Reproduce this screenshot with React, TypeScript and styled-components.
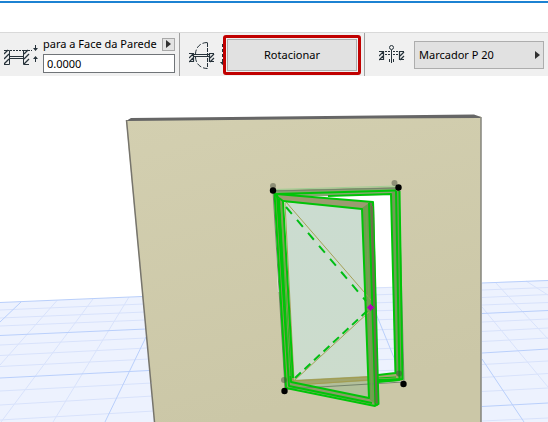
import React from "react";
import styled, { createGlobalStyle } from "styled-components";

const GlobalStyle = createGlobalStyle`
  * { box-sizing: border-box; }
  body {
    margin: 0;
    background: #ffffff;
    color: #000000;
    font: 11px/16px "Noto Sans", "Open Sans", sans-serif;
    overflow-x: hidden;
  }
`;

const Page = styled.main`
  display: flex;
  flex-direction: column;
`;

const TitleEdge = styled.div`
  height: 32px;
  border-top: 1px solid #ffffff;
  background: linear-gradient(#1c82d2 2px, #ffffff 2px);
`;

const Toolbar = styled.div`
  display: flex;
  height: 44px;
  border-top: 1px solid #d9d9d9;
  background: #f0f0f0;
`;

const Group = styled.section<{ $grow?: boolean; $gap?: number; $start?: number }>`
  display: flex;
  align-items: center;
  gap: ${(p) => p.$gap ?? 0}px;
  flex: ${(p) => (p.$grow ? "1" : "none")};
  padding: 0 4px 0 ${(p) => p.$start ?? 4}px;
  & + & {
    border-left: 1px solid #a0a0a0;
  }
`;

const ToolIcon = styled.svg`
  flex: none;
  fill: none;
  stroke: #26323a;
`;

const Field = styled.div`
  display: flex;
  flex-direction: column;
  gap: 2px;
  width: 132px;
`;

const FieldHead = styled.div`
  display: flex;
  align-items: center;
  justify-content: space-between;
  white-space: nowrap;
`;

const ArrowButton = styled.button`
  display: grid;
  place-items: center;
  width: 13px;
  height: 13px;
  padding: 0;
  border: 1px solid #a8a8a8;
  background: #e3e3e3;
`;

const Arrow = styled.svg`
  flex: none;
  fill: #303030;
`;

const ValueInput = styled.input`
  width: 100%;
  height: 19px;
  padding: 0 3px;
  border: 1px solid #707478;
  border-radius: 0;
  background: #ffffff;
  color: inherit;
  font: inherit;
`;

const Highlight = styled.div`
  z-index: 1;
  width: 138px;
  height: 40px;
  margin: 0 -1px 0 -2px;
  padding: 1px;
  border: 3px solid #c00000;
  border-radius: 3px;
  background: #f0f0f0;
`;

const ActionButton = styled.button`
  width: 100%;
  height: 100%;
  border: 1px solid #adadad;
  background: #e1e1e1;
  color: inherit;
  font: inherit;
`;

const MenuButton = styled.button`
  display: flex;
  flex: 1;
  align-items: center;
  justify-content: space-between;
  height: 28px;
  padding: 0 3px 0 4px;
  border: 1px solid #adadad;
  background: #e1e1e1;
  color: inherit;
  font: inherit;
  white-space: nowrap;
`;

const Viewport = styled.svg`
  display: block;
  width: 100%;
  height: auto;
`;

function RightArrow() {
  return (
    <Arrow width="5" height="8" viewBox="0 0 5 8" aria-hidden="true">
      <path d="M0 0 L5 4 L0 8Z" />
    </Arrow>
  );
}

function OffsetIcon() {
  return (
    <ToolIcon width="39" height="28" viewBox="0 41 39 28" aria-hidden="true">
      <path d="M0 54L4 50 M0 59L5 54 M0 64L5 59 M20 54L24 50 M20 59L25 54 M20 64L25 59" strokeWidth="1.3" />
      <path d="M0 50.5H5.5V64.5H0 M25 50.5H19.5V64.5H25" />
      <path d="M5.5 56.5H19.5 M5.5 58.5H19.5" />
      <path d="M6 50.5H28" strokeDasharray="2 1" />
      <path d="M31.5 45V50 M31.5 57V62" />
      <path d="M29 48H34L31.5 51Z M29 59H34L31.5 56Z" fill="#26323a" stroke="none" />
    </ToolIcon>
  );
}

function OpeningIcon() {
  return (
    <ToolIcon width="31" height="30" viewBox="189 39 31 30" aria-hidden="true">
      <path d="M189 52.5H193.5V60.5H189 M214 52.5H209.500V60.5H214 M189 57L193 53 M189 61L193 57 M210 57L214 53 M210 61L214 57" strokeWidth="1.2" />
      <path d="M194 53.5H209 M194 55.5H209" strokeWidth="1.2" />
      <path d="M207.5 41.5C199 41.5 195.5 48 195.5 53" strokeDasharray="5 2" />
      <path d="M195.500 56C195.5 62 200 67.5 207.5 67.5" strokeDasharray="5 2" />
      <path d="M207.5 42V67" strokeDasharray="4 1" />
    </ToolIcon>
  );
}

function DirectionIcon() {
  return (
    <ToolIcon width="5" height="24" viewBox="219 44 5 24" aria-hidden="true">
      <path d="M221.5 45V64" strokeDasharray="3 2" />
      <path d="M219 63H224L221.5 66Z" fill="#26323a" stroke="none" />
    </ToolIcon>
  );
}

function MarkerIcon() {
  return (
    <ToolIcon width="26" height="26" viewBox="379 43 26 26" aria-hidden="true">
      <path d="M379 52.5H383.5V60.5H379 M404 52.5H399.5V60.5H404 M379 57L383 53 M379 61L383 57 M400 57L404 53 M400 61L404 57" strokeWidth="1.2" />
      <path d="M385 52.5H390 M385 55.5H390 M393 52.5H399 M393 55.5H399" strokeDasharray="2 1" />
      <circle cx="391.5" cy="48.5" r="2" />
      <path d="M391.5 51V64 M389.5 60V63 M393.5 60V63" />
    </ToolIcon>
  );
}

const minorGrid = `
M0 310L144 304 M0 318L145 312 M0 326L145 320
M0 345L146 338 M0 355.5L147 348 M0 366.5L149 359
M0 391L152 383 M0 405L153 396 M0 420L154 411
M57 300.5L0 365 M93 299L1 422 M129 297L53 422
M482 290L548 287.5 M482 297.5L548 294.5 M482 305L548 302.5
M482 322L548 319 M482 331.5L548 328 M482 341.5L548 338
M482 364.5L548 361 M482 377.5L548 373.5 M482 391.5L548 388 M482 421L548 418
M495 282L548 339 M526 281L548 295 M482 307L548 387
M370 288L402 287 M370 295L402 294 M370 303L402 302 M370 311L402 310
M370 320L402 319 M370 330L402 329 M370 340L402 339 M370 349L402 348 M370 360L402 359 M370 371L402 370`;

const majorGrid = `
M0 302.5L142 296.5 M0 335.5L146 329 M0 378L149 370.5
M21 302L0 322 M146 337L105 422
M482 283L548 280.5 M482 313.5L548 310.5 M482 353L548 349 M482 406.5L548 403
M482 359L524 422 M370 299L397 365`;

function Scene() {
  return (
    <Viewport viewBox="0 76 548 346" role="img" aria-label="3D">
      <defs>
        <linearGradient id="wall" x1="0" y1="0" x2="0.3" y2="1">
          <stop offset="0" stopColor="#d3cfb0" />
          <stop offset="1" stopColor="#cbc7a7" />
        </linearGradient>
        <linearGradient id="glass" x1="0" y1="0" x2="0" y2="1">
          <stop offset="0" stopColor="#cbdcd0" />
          <stop offset="1" stopColor="#ccdccc" />
        </linearGradient>
      </defs>
      <path d="M0 302.5L548 280V422H0Z" fill="#edf2fe" />
      <path
        fillRule="evenodd"
        fill="url(#wall)"
        d="M126 120L481 116.5V422H154.5Z M274 191L398 188L403 381L286 388Z"
      />
      <path d="M274 191L398 188L401 287L278 292Z" fill="#ffffff" />
      <path d="M370 287L402 287L404 382L370 384Z" fill="#edf2fe" />
      <g fill="none" strokeWidth="1">
        <path d={minorGrid} stroke="#d8e2fb" />
        <path d={majorGrid} stroke="#b9cffb" />
      </g>
      <path d="M126 121L131 118L474 114.5L481 117L480 118L370 118.5L128 121Z" fill="#666666" />
      <path d="M126.5 120L154.5 422" stroke="#76746c" strokeWidth="1.5" />
      <path d="M481 117V422" stroke="#85847c" strokeWidth="1.5" />

      <path d="M274 190L398 187L399 194L391 195L276 197Z" fill="#88a571" />
      <path d="M391 193L399 189L403.5 381L395 376Z" fill="#709c55" />
      <path d="M285 382L395 373L403 381L286 389Z" fill="#a2a66b" />
      <path d="M285 202L362 209L369 399L293 381Z" fill="url(#glass)" />
      <path d="M292 380L368 376V382L295 387Z" fill="#a1a56c" />
      <path d="M300 385L368 381L369 398L322 388Z" fill="#b2bf9b" />
      <path d="M274 193L283 201L294 381L285 388Z" fill="#8a9b58" />
      <path d="M276 194L373 202V210L362 209L284 202Z" fill="#9b9b70" />
      <path d="M286 381L369 398L378 402V406L373 405L286 387Z" fill="#8a9c67" />
      <path d="M362 208L369 203L377 405L369 399Z" fill="#729a50" />
      <path d="M369 202L374 202L378.5 405L375 405Z" fill="#727451" />

      <g fill="none" strokeLinejoin="round">
        <path d="M273 189.5L398 186" stroke="#a1ce93" />
        <path d="M273 191L399 188L404 382 M273 191L285 388 M286 389L403 382" stroke="#74836b" />
        <path d="M286 202L371 300 M369 312L295 380 M285 203L294 380" stroke="#a5a056" />
        <path d="M292 381L368 377 M297 385L368 380 M378 380L400 379" stroke="#a39d50" />
        <path d="M286 207L366 301" stroke="#00be14" strokeWidth="2" strokeDasharray="9 8" />
        <path d="M295 378L367 311" stroke="#00be14" strokeWidth="2" strokeDasharray="8 5" />
        <g stroke="#00c408" strokeWidth="2">
          <path d="M274.5 193L286 388L375 406L378.5 404L373 202L276 194L396 190.5" />
          <path d="M277 194L289 386L372 403 M279 199L291 382L369 398L362 209L283 201L293 378" />
          <path d="M275 195L283 201" />
          <path d="M369 203L375.5 405" />
          <path d="M328 196L391 194L395.5 373L378 375" />
          <path d="M396 191L399.5 380L378 382 M399.5 191L402.5 379L378 380" />
          <path d="M378 378L396 377" strokeWidth="1" />
        </g>
        <path d="M372 206L376.5 403" stroke="#6a7048" strokeWidth="2" />
        <path d="M366 208L372 400 M281 205L290 376" stroke="#6dab4d" />
      </g>

      <g fill="#414638" fillOpacity="0.45">
        <circle cx="273" cy="186" r="3" />
        <circle cx="394.5" cy="183" r="3" />
        <circle cx="284" cy="380" r="3" />
        <circle cx="399" cy="373.5" r="3" />
      </g>
      <g fill="#000000">
        <circle cx="273" cy="190.5" r="3.2" />
        <circle cx="398.5" cy="187.5" r="3.2" />
        <circle cx="284.5" cy="391" r="3.2" />
        <circle cx="403.5" cy="384" r="3.2" />
      </g>
      <path d="M370.5 304L374 307.5L370.5 311L367 307.5Z" fill="#b000b8" />
    </Viewport>
  );
}

export default function App() {
  return (
    <Page>
      <GlobalStyle />
      <TitleEdge />
      <Toolbar role="toolbar">
        <Group>
          <OffsetIcon />
          <Field>
            <FieldHead>
              <label htmlFor="reveal">para a Face da Parede</label>
              <ArrowButton aria-label="para a Face da Parede">
                <RightArrow />
              </ArrowButton>
            </FieldHead>
            <ValueInput id="reveal" defaultValue="0.0000" />
          </Field>
        </Group>
        <Group $start={9}>
          <OpeningIcon />
          <DirectionIcon />
          <Highlight>
            <ActionButton>Rotacionar</ActionButton>
          </Highlight>
        </Group>
        <Group $grow $gap={9} $start={14}>
          <MarkerIcon />
          <MenuButton>
            Marcador P 20
            <RightArrow />
          </MenuButton>
        </Group>
      </Toolbar>
      <Scene />
    </Page>
  );
}
